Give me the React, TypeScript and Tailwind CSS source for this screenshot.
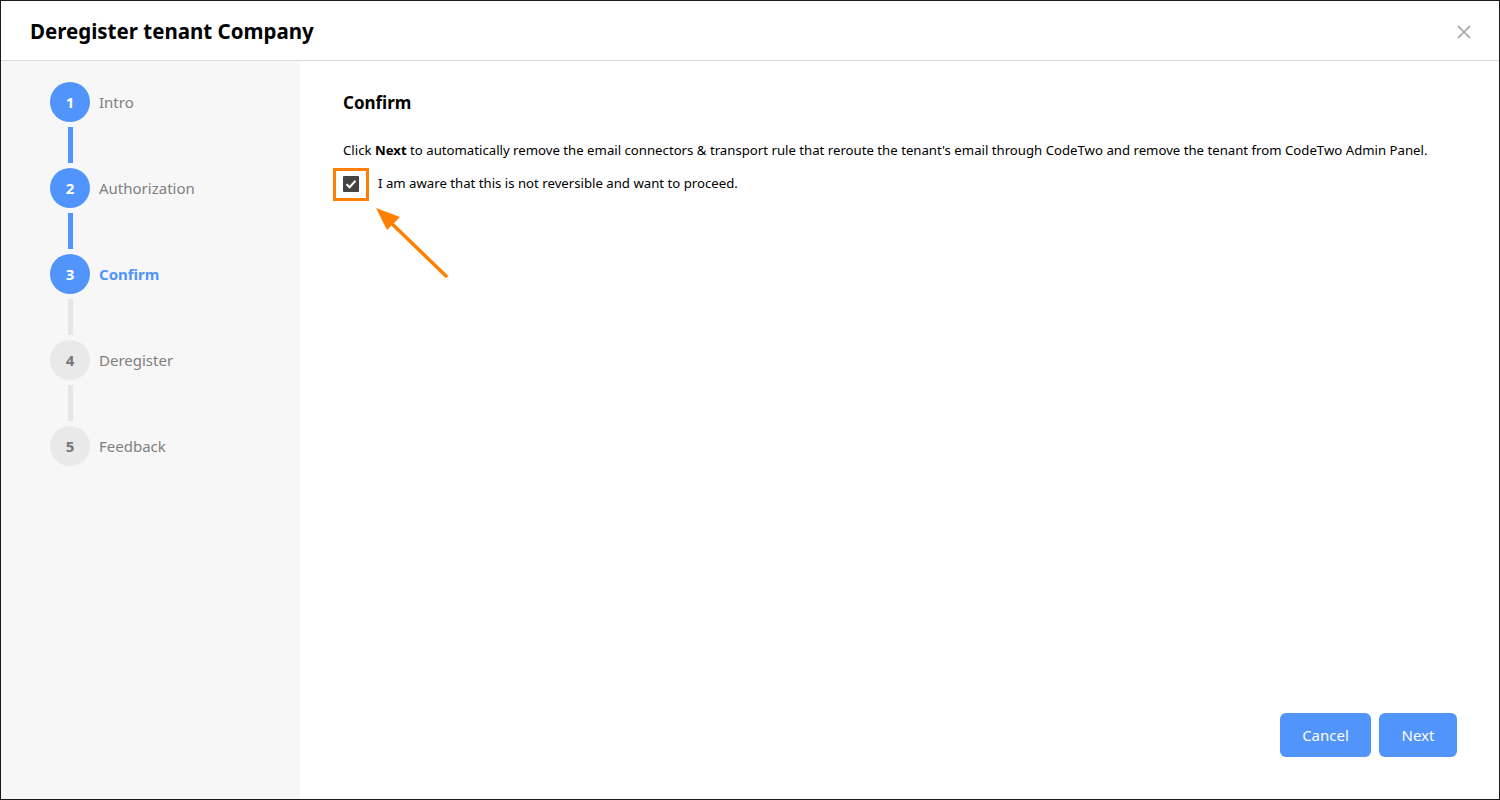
import React from 'react';

const steps = [
    { n: 1, label: 'Intro', state: 'done' },
    { n: 2, label: 'Authorization', state: 'done' },
    { n: 3, label: 'Confirm', state: 'active' },
    { n: 4, label: 'Deregister', state: 'todo' },
    { n: 5, label: 'Feedback', state: 'todo' },
];

const Stepper: React.FC = () => (
    <div className="flex flex-col pl-[49px] pt-[21px]">
        {steps.map((s, i) => {
            const blue = s.state !== 'todo';
            const nextBlue = i + 1 < steps.length && steps[i + 1].state !== 'todo';
            return (
                <div key={s.n} className="flex flex-col">
                    <div className="flex items-center h-[40px]">
                        <div className={`w-[40px] h-[40px] rounded-full flex items-center justify-center text-[15px] font-bold ${blue ? 'bg-[#5094fc] text-white' : 'bg-[#e9e9e9] text-[#777]'}`}>{s.n}</div>
                        <div className={`ml-[9px] text-[15px] ${s.state === 'active' ? 'text-[#5094fc] font-bold' : 'text-[#808080]'}`}>{s.label}</div>
                    </div>
                    {i < steps.length - 1 && (
                        <div className="w-[40px] flex justify-center py-[5px]">
                            <div className={`w-[5px] h-[36px] ${nextBlue ? 'bg-[#5094fc]' : 'bg-[#e6e6e6]'}`} />
                        </div>
                    )}
                </div>
            );
        })}
    </div>
);

export default function App() {
    return (
        <div className="w-[1500px] h-[800px] border border-[#1a1a1a] bg-white flex flex-col text-[#111]" style={{ fontFamily: '"Noto Sans", "Open Sans", sans-serif' }}>
            <div className="h-[60px] shrink-0 border-b border-[#dcdcdc] flex items-center justify-between pl-[29px] pr-[27px] pt-[2px]">
                <div className="text-[20.5px] font-bold text-black">Deregister tenant Company</div>
                <svg width="16" height="16" viewBox="0 0 16 16" className="text-[#a0a0a0]">
                    <path d="M2 2 L14 14 M14 2 L2 14" stroke="currentColor" strokeWidth="1.6" />
                </svg>
            </div>
            <div className="flex flex-1 min-h-0">
                <div className="w-[299px] shrink-0 bg-[#f7f7f7]">
                    <Stepper />
                </div>
                <div className="flex-1 relative flex flex-col justify-between pl-[43px] pr-[42px] pt-[29px] pb-[42px]">
                    <div>
                        <div className="text-[17px] font-bold text-black">Confirm</div>
                        <p className="mt-[25px] text-[13.2px] text-black">
                            Click <b>Next</b> to automatically remove the email connectors &amp; transport rule that reroute the tenant's email through CodeTwo and remove the tenant from CodeTwo Admin Panel.
                        </p>
                        <div className="mt-[14px] flex items-center">
                            <div className="w-[16px] h-[16px] bg-[#444] rounded-[1px] flex items-center justify-center">
                                <svg width="14" height="14" viewBox="0 0 14 14">
                                    <path d="M2.5 7.2 L5.6 10.2 L11.5 3.8" stroke="white" strokeWidth="2" fill="none" />
                                </svg>
                            </div>
                            <span className="ml-[19px] text-[13.2px] text-black">I am aware that this is not reversible and want to proceed.</span>
                        </div>
                    </div>
                    <div className="flex justify-end gap-[8px]">
                        <button className="w-[91px] h-[44px] rounded-[6px] bg-[#5094fc] text-white text-[15px]">Cancel</button>
                        <button className="w-[78px] h-[44px] rounded-[6px] bg-[#5094fc] text-white text-[15px]">Next</button>
                    </div>
                    {/* annotation */}
                    <div className="absolute left-[33px] top-[107px] w-[36px] h-[33px] border-[3px] border-[#ff8000]" />
                    <svg className="absolute left-[60px] top-[140px]" width="100" height="90" viewBox="0 0 100 90">
                        <path d="M86 75 L25 16" stroke="#ff8000" strokeWidth="3.5" strokeLinecap="round" />
                        <path d="M16 7 L40 16 L27 29 Z" fill="#ff8000" />
                    </svg>
                </div>
            </div>
        </div>
    );
}
